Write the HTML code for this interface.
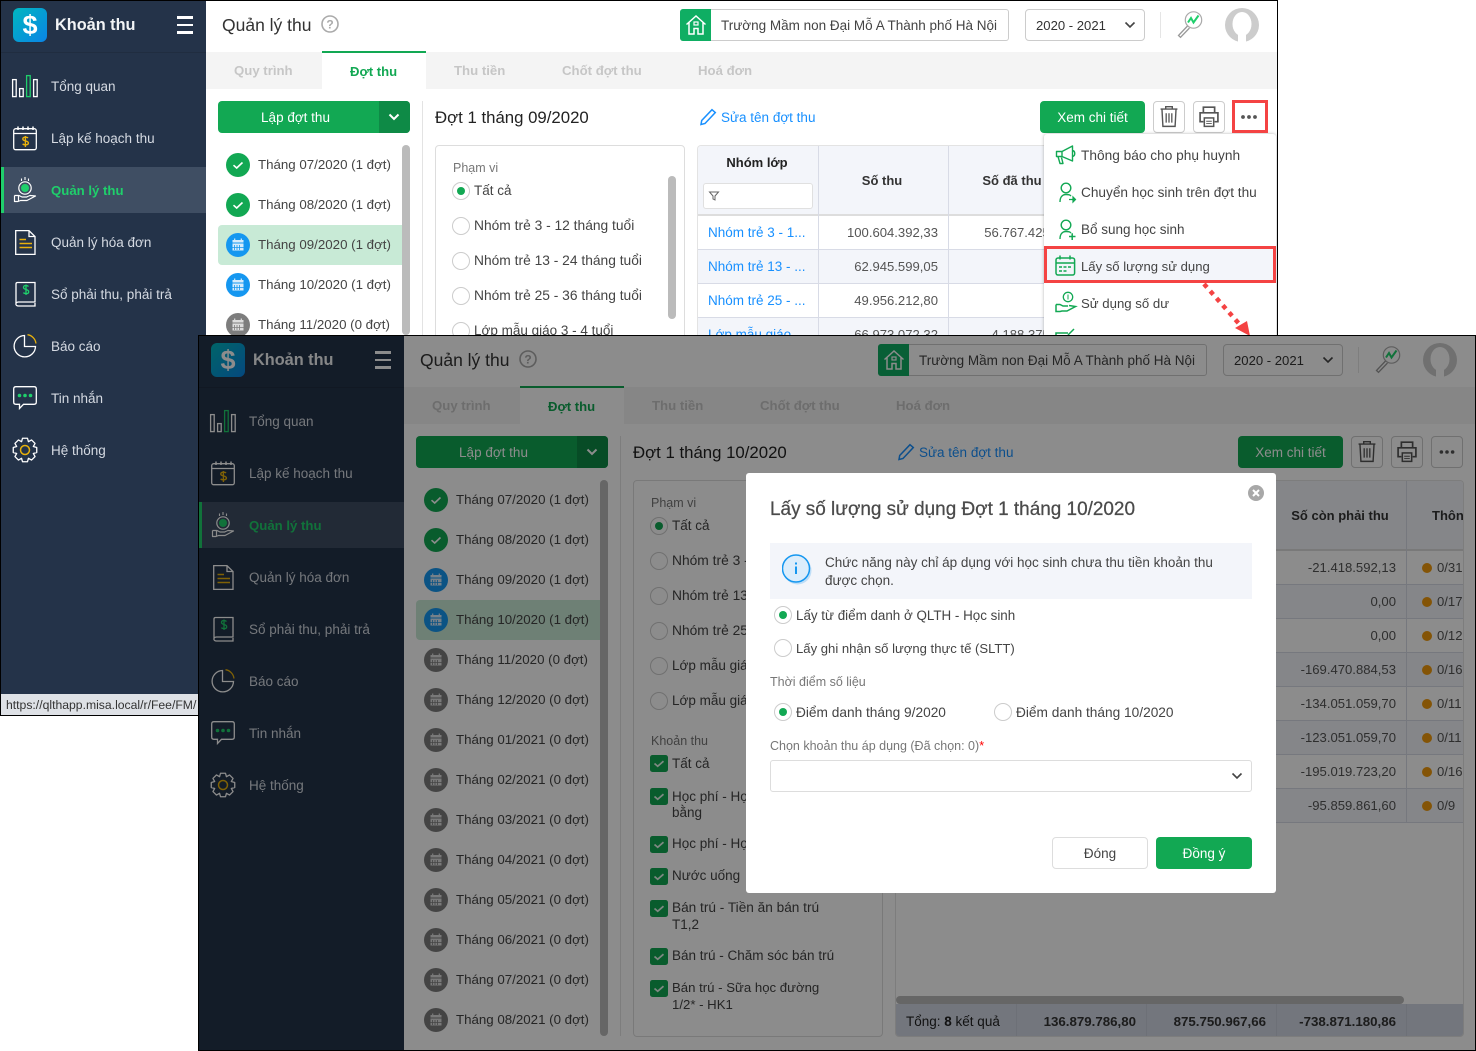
<!DOCTYPE html>
<html lang="vi"><head><meta charset="utf-8"><title>Quản lý thu</title>
<style>
*{box-sizing:border-box}
html,body{margin:0;padding:0;width:1476px;height:1051px;overflow:hidden;background:#fff;font-family:"Liberation Sans","DejaVu Sans",sans-serif;font-size:13.5px;color:#444}
.win{position:absolute;width:1278px;height:716px;overflow:hidden;background:#fff}
.a{position:absolute}
.t{position:absolute;white-space:nowrap;line-height:20px;height:20px;margin-top:1px}
.c{transform:translateX(-50%)}
.rr{transform:translateX(-100%)}
.bd{position:absolute;left:0;top:0;width:1278px;height:716px;border:1px solid #000;pointer-events:none}
.ov{position:absolute;left:0;top:0;width:1278px;height:716px;background:rgba(0,0,0,.45)}
.side{position:absolute;left:1px;top:1px;width:205px;height:714px;background:#243349}
.nt{color:#d5dae2}
.ic{position:absolute;width:30px;height:30px;left:10px}
.m{position:absolute;left:226px;width:24px;height:24px}
.r{position:absolute;width:18px;height:18px;border:1px solid #ccc;border-radius:50%;background:#fff}
.r.on:after{content:"";position:absolute;left:4px;top:4px;width:8px;height:8px;border-radius:50%;background:#12a853}
.k{position:absolute;left:452px;width:18px;height:17px}
.btn{position:absolute;border-radius:4px;background:#12a853;color:#fff;text-align:center;line-height:34px;height:32px}
.wb{position:absolute;top:101px;width:32px;height:32px;border:1px solid #ccc;border-radius:4px;background:#fff}
.tab{color:#c6c6c6;font-weight:bold;font-size:13.2px}
.lb{color:#777;font-size:12.5px}
.n{color:#555;font-size:13.1px}
.mo{font-size:13.3px;margin-top:0}
.ng{font-size:13.8px}
.lnk{color:#1890ff}
.b{font-weight:bold;color:#333;font-size:13.3px}
.red{position:absolute;border:3px solid #f44343}
.mi{position:absolute;left:1052px;width:26px;height:26px}
</style></head><body>
<svg width="0" height="0" style="position:absolute"><defs>
<symbol id="bars" viewBox="0 0 30 30"><g fill="none" stroke="#fff" stroke-width="1.3"><rect x="2.6" y="8.6" width="3.6" height="17"/><rect x="9.6" y="17.6" width="3.6" height="8"/><rect x="23.6" y="8.6" width="3.6" height="17"/></g><rect x="16.6" y="4.6" width="3.6" height="21" fill="none" stroke="#1fcf6b" stroke-width="1.3"/></symbol>
<symbol id="cal" viewBox="0 0 30 30"><rect x="3.7" y="5.7" width="22.6" height="21" rx="2" fill="none" stroke="#fff" stroke-width="1.3"/><path d="M4 10.5H26" stroke="#fff" stroke-width="1.2"/><path d="M8 3.5V7M13 3.5V7M18 3.5V7M23 3.5V7" stroke="#fff" stroke-width="1.5"/><path d="M18 15C17 13.800 12.800 13.800 12.800 16c0 2.600 5.600 1.300 5.600 4 0 2.300-4.200 2.100-5.800 1M15.400 13V24" fill="none" stroke="#e8b10c" stroke-width="1.400"/></symbol>
<symbol id="hand" viewBox="0 0 30 30"><circle cx="15" cy="13" r="6.200" fill="none" stroke="#fff" stroke-width="1.200"/><circle cx="15" cy="13" r="4" fill="#1fcf6b"/><path d="M15 2V5M11.500 3.500V6M18.500 3.500V6" stroke="#fff" stroke-width="1.100"/><path d="M4.500 20.500H9L12 22H17.500M4.500 20.500V26.500H8L10.500 25.500H17L25.500 21 20 20.500 16.500 22M8.500 20.500V26" fill="none" stroke="#fff" stroke-width="1.200" stroke-linejoin="round"/></symbol>
<symbol id="doc" viewBox="0 0 30 30"><path d="M5.700 3.600H19L25 9.500V27.400H5.700ZM19 3.600V9.500H25" fill="none" stroke="#fff" stroke-width="1.300"/><path d="M9.500 12.500H16M9.500 16.500H22M9.500 20.500H22" stroke="#e8b10c" stroke-width="1.400"/></symbol>
<symbol id="book" viewBox="0 0 30 30"><path d="M7.500 3.500H25V23H8.500C5 23 5 27 8.500 27H25V24M6 25V5C6 4 6.500 3.500 7.500 3.500" fill="none" stroke="#fff" stroke-width="1.300"/><path d="M18.500 7.500C17 6 13.500 6 13.500 8.500c0 2.600 5.200 1.500 5.200 4.200 0 2.500-3.700 2.300-5.400 1M16 5.500V16" fill="none" stroke="#1fcf6b" stroke-width="1.300"/></symbol>
<symbol id="pie" viewBox="0 0 30 30"><path d="M14.500 4.500A10.700 10.700 0 1 0 25.500 15.500H14.500Z" fill="none" stroke="#fff" stroke-width="1.300"/><path d="M17.500 3.700A10 10 0 0 1 26 12.500" fill="none" stroke="#e8b10c" stroke-width="1.300"/></symbol>
<symbol id="msg" viewBox="0 0 30 30"><path d="M6 3.700H24C25.500 3.700 26.300 4.500 26.300 6V19C26.300 20.500 25.500 21.300 24 21.300H13.500L9.500 25.500V21.300H6C4.500 21.300 3.700 20.500 3.700 19V6C3.700 4.500 4.500 3.700 6 3.700Z" fill="none" stroke="#fff" stroke-width="1.300"/><circle cx="9.500" cy="12.500" r="1.800" fill="#1fcf6b"/><circle cx="15" cy="12.500" r="1.800" fill="#1fcf6b"/><circle cx="20.500" cy="12.500" r="1.800" fill="#1fcf6b"/></symbol>
<symbol id="gear" viewBox="0 0 30 30"><polygon points="26.740,17.490 23.310,18.440 25.060,21.540 21.540,25.060 18.440,23.310 17.490,26.740 12.510,26.740 11.560,23.310 8.460,25.060 4.940,21.540 6.690,18.440 3.260,17.490 3.260,12.510 6.690,11.560 4.940,8.460 8.460,4.940 11.560,6.690 12.510,3.260 17.490,3.260 18.440,6.690 21.540,4.940 25.060,8.460 23.310,11.560 26.740,12.510" fill="none" stroke="#fff" stroke-width="1.300" stroke-linejoin="round"/><circle cx="15" cy="15" r="4.500" fill="none" stroke="#e8b10c" stroke-width="1.500"/></symbol>
<symbol id="mok" viewBox="0 0 24 24"><circle cx="12" cy="12" r="12" fill="#12a853"/><path d="M7.500 12.200L10.700 15 16.500 9.500" fill="none" stroke="#fff" stroke-width="1.600"/></symbol>
<symbol id="mbl" viewBox="0 0 24 24"><circle cx="12" cy="12" r="12" fill="#1597f0"/><rect x="6.500" y="7" width="11" height="10.500" fill="#d8ecfb"/><path d="M6.500 10H17.500" stroke="#1597f0"/><path d="M8.500 12V17M11 12V17M13.500 12V17M6.500 14.500H17.500" stroke="#1597f0" stroke-width=".8"/><path d="M8.700 5.500V8M15.300 5.500V8" stroke="#d8ecfb" stroke-width="1.200"/></symbol>
<symbol id="mgr" viewBox="0 0 24 24"><circle cx="12" cy="12" r="12" fill="#7d7d7d"/><rect x="6.500" y="7" width="11" height="10.500" fill="#ddd"/><path d="M6.500 10H17.500" stroke="#7d7d7d"/><path d="M8.500 12V17M11 12V17M13.500 12V17M6.500 14.500H17.500" stroke="#7d7d7d" stroke-width=".8"/><path d="M8.700 5.500V8M15.300 5.500V8" stroke="#ddd" stroke-width="1.200"/></symbol>
<symbol id="chk" viewBox="0 0 18 17"><rect width="18" height="17" rx="2.500" fill="#12a853"/><path d="M4.500 8.500L7.700 11.300 13.500 6.200" fill="none" stroke="#e8f8ee" stroke-width="1.700"/></symbol>
<symbol id="chev" viewBox="0 0 12 8"><path d="M1.500 1.500L6 6 10.500 1.500" fill="none" stroke="#444" stroke-width="1.600"/></symbol>
<symbol id="home" viewBox="0 0 24 24"><path d="M2.500 11.500L12 3 21.500 11.500M5 9.500V21H10V15.500H14V21H19V9.500" fill="none" stroke="#fff" stroke-width="1.500"/><rect x="10" y="9" width="4" height="3" fill="none" stroke="#fff" stroke-width="1.200"/></symbol>
<symbol id="srch" viewBox="0 0 30 30"><circle cx="18.500" cy="11" r="8.200" fill="none" stroke="#aaa" stroke-width="1.200"/><path d="M12.500 17L3.500 26.500 5.500 28.300 14.500 19" fill="none" stroke="#999" stroke-width="1.300"/><path d="M13 13.500L16 9 18.500 13.500 23.500 6.500" fill="none" stroke="#1fcf6b" stroke-width="2"/></symbol>
<symbol id="trash" viewBox="0 0 32 32"><path d="M7 7.500H25M12.500 7.500V5H19.500V7.500M8.500 7.500L9.500 26H22.500L23.500 7.500" fill="none" stroke="#555" stroke-width="1.500"/><path d="M13 12V22M16 12V22M19 12V22" stroke="#555" stroke-width="1.400"/></symbol>
<symbol id="print" viewBox="0 0 32 32"><path d="M10 11V5.500H22V11M10 21H6.500V11.500H25.500V21H22" fill="none" stroke="#555" stroke-width="1.800"/><rect x="11" y="17" width="10" height="9" fill="#fff" stroke="#555" stroke-width="1.600"/><path d="M13 20.500H19M13 23H19" stroke="#555"/></symbol>
<symbol id="dots" viewBox="0 0 32 32"><circle cx="10" cy="16" r="1.900" fill="#555"/><circle cx="16" cy="16" r="1.900" fill="#555"/><circle cx="22" cy="16" r="1.900" fill="#555"/></symbol>
<symbol id="pen" viewBox="0 0 18 18"><path d="M13 1.700L16.300 4.500 6 15.500 2 16.500 2.700 12.500Z" fill="none" stroke="#1890ff" stroke-width="1.500"/></symbol>
<symbol id="filt" viewBox="0 0 12 12"><path d="M1.500 2H10.500L7 6V10L5 9V6Z" fill="none" stroke="#666"/></symbol>
<symbol id="mega" viewBox="0 0 26 26"><path d="M4.500 9.500H10L20.500 4V19L10 14.500H4.500ZM10 9.500V14.500M6 14.500L8 21.500H11L9.500 15.500M20.500 8.500C23.500 9 23.500 14 20.500 14.500" fill="none" stroke="#12a853" stroke-width="1.400" stroke-linejoin="round"/></symbol>
<symbol id="utr" viewBox="0 0 26 26"><circle cx="14" cy="9" r="4.800" fill="none" stroke="#12a853" stroke-width="1.400"/><path d="M8 23C8 18 10.500 15.500 14 15.500S18 16 19 17" fill="none" stroke="#12a853" stroke-width="1.400"/><path d="M17 20.500H21M21 18V23L23.500 20.500Z" fill="#12a853" stroke="#12a853" stroke-width="1.200"/></symbol>
<symbol id="uadd" viewBox="0 0 26 26"><circle cx="14" cy="9" r="4.800" fill="none" stroke="#12a853" stroke-width="1.400"/><path d="M8 23C8 18 10.500 15.500 14 15.500S18 16 19 17" fill="none" stroke="#12a853" stroke-width="1.400"/><path d="M17 20.500H23.500M20.200 17.200V24" stroke="#12a853" stroke-width="1.500"/></symbol>
<symbol id="gcal" viewBox="0 0 26 26"><rect x="4" y="5" width="18.600" height="17" rx="2" fill="none" stroke="#12a853" stroke-width="1.500"/><path d="M4 10H22.300M8 2.500V6.500M18 2.500V6.500" stroke="#12a853" stroke-width="1.500"/><path d="M7 14H10M11.500 14H14.500M16 14H19M7 18H10M11.500 18H14.500" stroke="#12a853" stroke-width="1.500"/></symbol>
<symbol id="ghand" viewBox="0 0 26 26"><circle cx="16" cy="7" r="4.700" fill="none" stroke="#12a853" stroke-width="1.300"/><path d="M16 4.500V9.500" stroke="#12a853"/><path d="M4 14.500H8L11 16H16M4 14.500V21.500H8L10 21H15L23.500 16.500 17 15.500" fill="none" stroke="#12a853" stroke-width="1.500"/></symbol>
</defs></svg>

<!-- WINDOW 1 -->
<div class="win" style="left:0;top:0">
<div class="a" style="left:206px;top:1px;width:1071px;height:51px;background:#fff;box-shadow:0 1px 3px rgba(0,0,0,.08)"></div>
<div class="a" style="left:206px;top:52px;width:1071px;height:37px;background:#f4f4f4"></div>
<div class="a" style="left:322px;top:51px;width:104px;height:38px;background:#fff;border-top:2px solid #12a853"></div>
<div class="t" style="left:222px;top:14px;font-size:17.5px;color:#333">Quản lý thu</div>
<svg class="a" style="left:321px;top:15px" width="18" height="18"><circle cx="9" cy="9" r="8" fill="none" stroke="#aaa" stroke-width="1.600"/><text x="9" y="13.500" text-anchor="middle" font-size="12" font-weight="bold" fill="#aaa" font-family="Liberation Sans">?</text></svg>
<div class="a" style="left:680px;top:9px;width:329px;height:32px;border:1px solid #ccc;border-radius:3px"></div>
<div class="a" style="left:680px;top:9px;width:31px;height:32px;background:#0fae63;border-radius:3px 0 0 3px"></div>
<svg class="a" style="left:684px;top:13px" width="24" height="24"><use href="#home"/></svg>
<div class="t" style="left:721px;top:15px">Trường Mầm non Đại Mỗ A Thành phố Hà Nội</div>
<div class="a" style="left:1025px;top:9px;width:120px;height:32px;border:1px solid #ccc;border-radius:4px"></div>
<div class="t" style="left:1036px;top:15px;color:#333;font-size:13.1px">2020 - 2021</div>
<svg class="a" style="left:1124px;top:21px" width="12" height="8"><use href="#chev"/></svg>
<div class="a" style="left:1160px;top:12px;width:1px;height:26px;background:#e5e5e5"></div>
<svg class="a" style="left:1175px;top:9px" width="30" height="30"><use href="#srch"/></svg>
<svg class="a" style="left:1225px;top:8px" width="34" height="34"><circle cx="17" cy="17" r="17" fill="#ccc"/><ellipse cx="17" cy="16" rx="9.500" ry="12" fill="#fff"/><rect x="13" y="24" width="8" height="10" fill="#fff"/></svg>
<div class="t tab" style="left:234px;top:60px">Quy trình</div>
<div class="t" style="left:350px;top:61px;font-size:13.1px;font-weight:bold;color:#12a853">Đợt thu</div>
<div class="t tab" style="left:454px;top:60px">Thu tiền</div>
<div class="t tab" style="left:562px;top:60px">Chốt đợt thu</div>
<div class="t tab" style="left:698px;top:60px">Hoá đơn</div>
<div class="btn" style="left:218px;top:101px;width:192px;padding-right:37px">Lập đợt thu</div>
<div class="a" style="left:379px;top:101px;width:31px;height:32px;background:#0e8a46;border-radius:0 4px 4px 0"></div>
<svg class="a" style="left:388px;top:113px" width="12" height="8"><path d="M1.500 1.500L6 6 10.500 1.500" fill="none" stroke="#fff" stroke-width="2"/></svg>
<div class="a" style="left:218px;top:225px;width:184px;height:40px;background:#c8ead6;border-radius:4px 0 0 4px"></div>
<div class="a" style="left:402px;top:145px;width:8px;height:190px;background:#bbb;border-radius:4px"></div>
<div class="a" style="left:422px;top:101px;width:1px;height:240px;background:#e3e3e3"></div>
<svg class="m" style="top:153px"><use href="#mok"/></svg><div class="t mo" style="left:258px;top:155px">Tháng 07/2020 (1 đợt)</div>
<svg class="m" style="top:193px"><use href="#mok"/></svg><div class="t mo" style="left:258px;top:195px">Tháng 08/2020 (1 đợt)</div>
<svg class="m" style="top:233px"><use href="#mbl"/></svg><div class="t mo" style="left:258px;top:235px">Tháng 09/2020 (1 đợt)</div>
<svg class="m" style="top:273px"><use href="#mbl"/></svg><div class="t mo" style="left:258px;top:275px">Tháng 10/2020 (1 đợt)</div>
<svg class="m" style="top:313px"><use href="#mgr"/></svg><div class="t mo" style="left:258px;top:315px">Tháng 11/2020 (0 đợt)</div>
<div class="t" style="left:435px;top:107px;font-size:16.8px;color:#222">Đợt 1 tháng 09/2020</div>
<svg class="a" style="left:699px;top:108px" width="18" height="18"><use href="#pen"/></svg>
<div class="t lnk" style="left:721px;top:107px">Sửa tên đợt thu</div>
<div class="btn" style="left:1040px;top:101px;width:105px">Xem chi tiết</div>
<svg class="wb" style="left:1153px"><use href="#trash"/></svg>
<svg class="wb" style="left:1193px"><use href="#print"/></svg>
<svg class="wb" style="left:1233px;border:0"><use href="#dots"/></svg>
<div class="a" style="left:435px;top:145px;width:250px;height:240px;border:1px solid #ddd;border-radius:4px"></div>
<div class="t lb" style="left:453px;top:157px">Phạm vi</div>
<div class="a" style="left:668px;top:176px;width:8px;height:143px;background:#bbb;border-radius:4px"></div>
<div class="r on" style="left:452px;top:182px"></div><div class="t" style="left:474px;top:180px">Tất cả</div>
<div class="r" style="left:452px;top:217px"></div><div class="t ng" style="left:474px;top:215px">Nhóm trẻ 3 - 12 tháng tuổi</div>
<div class="r" style="left:452px;top:252px"></div><div class="t ng" style="left:474px;top:250px">Nhóm trẻ 13 - 24 tháng tuổi</div>
<div class="r" style="left:452px;top:287px"></div><div class="t ng" style="left:474px;top:285px">Nhóm trẻ 25 - 36 tháng tuổi</div>
<div class="r" style="left:452px;top:322px"></div><div class="t" style="left:474px;top:320px">Lớp mẫu giáo 3 - 4 tuổi</div>
<div class="a" style="left:697px;top:145px;width:569px;height:240px;border:1px solid #e3e3e3;border-bottom:0;border-radius:4px 4px 0 0;overflow:hidden">
 <div class="a" style="left:0;top:0;width:569px;height:70px;background:#f3f5fa;border-bottom:2px solid #ddd"></div>
 <div class="a" style="left:0;top:103px;width:569px;height:35px;background:#f3f5fa;border-top:1px solid #d8dbe6;border-bottom:1px solid #d8dbe6"></div>
 <div class="a" style="left:0;top:171px;width:569px;height:35px;background:#f3f5fa;border-top:1px solid #d8dbe6;border-bottom:1px solid #d8dbe6"></div>
 <div class="a" style="left:120px;top:0;width:1px;height:240px;background:#d8dbe6"></div>
 <div class="a" style="left:250px;top:0;width:1px;height:240px;background:#d8dbe6"></div>
</div>
<div class="t c" style="left:757px;top:152px;font-size:13px;font-weight:bold;color:#222">Nhóm lớp</div>
<div class="a" style="left:703px;top:183px;width:110px;height:26px;background:#fff;border:1px solid #e0e0e0;border-radius:3px"></div>
<svg class="a" style="left:708px;top:190px" width="12" height="12"><use href="#filt"/></svg>
<div class="t c" style="left:882px;top:170px;font-size:13px;font-weight:bold;color:#333">Số thu</div>
<div class="t c" style="left:1012px;top:170px;font-size:13px;font-weight:bold;color:#333">Số đã thu</div>
<div class="t lnk" style="left:708px;top:222px">Nhóm trẻ 3 - 1...</div>
<div class="t lnk" style="left:708px;top:256px">Nhóm trẻ 13 - ...</div>
<div class="t lnk" style="left:708px;top:290px">Nhóm trẻ 25 - ...</div>
<div class="t lnk" style="left:708px;top:324px">Lớp mẫu giáo ...</div>
<div class="t rr n" style="left:938px;top:222px">100.604.392,33</div>
<div class="t rr n" style="left:938px;top:256px">62.945.599,05</div>
<div class="t rr n" style="left:938px;top:290px">49.956.212,80</div>
<div class="t rr n" style="left:938px;top:324px">66.973.072,32</div>
<div class="t rr n" style="left:1068px;top:222px">56.767.425,03</div>
<div class="t rr n" style="left:1068px;top:324px">4.188.375,20</div>
<div class="a" style="left:1044px;top:134px;width:232px;height:210px;background:#fff;border-radius:3px;box-shadow:0 0 3px rgba(0,0,0,.3)"></div>
<svg class="mi" style="top:142px"><use href="#mega"/></svg><div class="t" style="left:1081px;top:145px;font-size:13.7px">Thông báo cho phụ huynh</div>
<svg class="mi" style="top:179px"><use href="#utr"/></svg><div class="t" style="left:1081px;top:182px;font-size:13.65px">Chuyển học sinh trên đợt thu</div>
<svg class="mi" style="top:216px"><use href="#uadd"/></svg><div class="t" style="left:1081px;top:219px">Bổ sung học sinh</div>
<div class="a" style="left:1044px;top:247px;width:232px;height:36px;background:#f3f5fa"></div>
<svg class="mi" style="top:253px"><use href="#gcal"/></svg><div class="t" style="left:1081px;top:256px;font-size:13.1px">Lấy số lượng sử dụng</div>
<svg class="mi" style="top:290px"><use href="#ghand"/></svg><div class="t" style="left:1081px;top:293px;font-size:13.2px">Sử dụng số dư</div>
<svg class="a" style="left:1054px;top:328px" width="24" height="10"><path d="M2 10V5H14M14 7L20 1" fill="none" stroke="#12a853" stroke-width="1.500"/></svg>
<div class="red" style="left:1044px;top:246px;width:232px;height:37px"></div>
<div class="red" style="left:1232px;top:100px;width:36px;height:33px"></div>
<svg class="a" style="left:1195px;top:280px" width="70" height="60"><path d="M9 4L46 46" stroke="#f44343" stroke-width="4.500" stroke-dasharray="4.500 5" fill="none"/><polygon points="40,48 52,41 55,56" fill="#f44343"/></svg>
<div class="side"></div>
<div class="a" style="left:1px;top:52px;width:205px;height:1px;background:#202d40"></div>
<div class="a" style="left:13px;top:8px;width:34px;height:34px;border-radius:6px;background:linear-gradient(135deg,#00b7bf,#0a84e6)"></div>
<div class="t c" style="left:30px;top:10px;font-size:27px;font-weight:bold;color:#fff;line-height:28px;height:28px">$</div>
<div class="t" style="left:55px;top:14px;font-size:16.3px;font-weight:bold;color:#f2f4f6">Khoản thu</div>
<div class="a" style="left:177px;top:16px;width:16px;height:2.500px;background:#fff"></div>
<div class="a" style="left:177px;top:23.500px;width:16px;height:2.500px;background:#fff"></div>
<div class="a" style="left:177px;top:31px;width:16px;height:2.500px;background:#fff"></div>
<div class="a" style="left:1px;top:167px;width:205px;height:46px;background:#3f4e63"></div>
<div class="a" style="left:1px;top:167px;width:3px;height:46px;background:#1fcf6b"></div>
<svg class="ic" style="top:71px"><use href="#bars"/></svg><div class="t nt" style="left:51px;top:76px">Tổng quan</div>
<svg class="ic" style="top:123px"><use href="#cal"/></svg><div class="t nt" style="left:51px;top:128px">Lập kế hoạch thu</div>
<svg class="ic" style="top:175px"><use href="#hand"/></svg><div class="t" style="left:51px;top:180px;color:#1fcf6b;font-weight:bold;font-size:13.2px">Quản lý thu</div>
<svg class="ic" style="top:227px"><use href="#doc"/></svg><div class="t nt" style="left:51px;top:232px">Quản lý hóa đơn</div>
<svg class="ic" style="top:279px"><use href="#book"/></svg><div class="t nt" style="left:51px;top:284px">Sổ phải thu, phải trả</div>
<svg class="ic" style="top:331px"><use href="#pie"/></svg><div class="t nt" style="left:51px;top:336px">Báo cáo</div>
<svg class="ic" style="top:383px"><use href="#msg"/></svg><div class="t nt" style="left:51px;top:388px">Tin nhắn</div>
<svg class="ic" style="top:435px"><use href="#gear"/></svg><div class="t nt" style="left:51px;top:440px">Hệ thống</div>
<div class="a" style="left:1px;top:694px;width:205px;height:21px;background:#dee1e6"></div>
<div class="t" style="left:6px;top:694px;font-size:12.2px;color:#333">https://qlthapp.misa.local/r/Fee/FM/</div>
<div class="bd"></div>
</div>

<!-- WINDOW 2 -->
<div class="win" style="left:198px;top:335px">
<div class="a" style="left:206px;top:1px;width:1071px;height:51px;background:#fff;box-shadow:0 1px 3px rgba(0,0,0,.08)"></div>
<div class="a" style="left:206px;top:52px;width:1071px;height:37px;background:#f4f4f4"></div>
<div class="a" style="left:322px;top:51px;width:104px;height:38px;background:#fff;border-top:2px solid #12a853"></div>
<div class="t" style="left:222px;top:14px;font-size:17.500px;color:#333">Quản lý thu</div>
<svg class="a" style="left:321px;top:15px" width="18" height="18"><circle cx="9" cy="9" r="8" fill="none" stroke="#aaa" stroke-width="1.600"/><text x="9" y="13.500" text-anchor="middle" font-size="12" font-weight="bold" fill="#aaa" font-family="Liberation Sans">?</text></svg>
<div class="a" style="left:680px;top:9px;width:329px;height:32px;border:1px solid #ccc;border-radius:3px"></div>
<div class="a" style="left:680px;top:9px;width:31px;height:32px;background:#0fae63;border-radius:3px 0 0 3px"></div>
<svg class="a" style="left:684px;top:13px" width="24" height="24"><use href="#home"/></svg>
<div class="t" style="left:721px;top:15px">Trường Mầm non Đại Mỗ A Thành phố Hà Nội</div>
<div class="a" style="left:1025px;top:9px;width:120px;height:32px;border:1px solid #ccc;border-radius:4px"></div>
<div class="t" style="left:1036px;top:15px;color:#333;font-size:13.1px">2020 - 2021</div>
<svg class="a" style="left:1124px;top:21px" width="12" height="8"><use href="#chev"/></svg>
<div class="a" style="left:1160px;top:12px;width:1px;height:26px;background:#e5e5e5"></div>
<svg class="a" style="left:1175px;top:9px" width="30" height="30"><use href="#srch"/></svg>
<svg class="a" style="left:1225px;top:8px" width="34" height="34"><circle cx="17" cy="17" r="17" fill="#ccc"/><ellipse cx="17" cy="16" rx="9.500" ry="12" fill="#fff"/><rect x="13" y="24" width="8" height="10" fill="#fff"/></svg>
<div class="t tab" style="left:234px;top:60px">Quy trình</div>
<div class="t" style="left:350px;top:61px;font-size:13.1px;font-weight:bold;color:#12a853">Đợt thu</div>
<div class="t tab" style="left:454px;top:60px">Thu tiền</div>
<div class="t tab" style="left:562px;top:60px">Chốt đợt thu</div>
<div class="t tab" style="left:698px;top:60px">Hoá đơn</div>
<div class="btn" style="left:218px;top:101px;width:192px;padding-right:37px">Lập đợt thu</div>
<div class="a" style="left:379px;top:101px;width:31px;height:32px;background:#0e8a46;border-radius:0 4px 4px 0"></div>
<svg class="a" style="left:388px;top:113px" width="12" height="8"><path d="M1.500 1.500L6 6 10.500 1.500" fill="none" stroke="#fff" stroke-width="2"/></svg>
<div class="a" style="left:218px;top:265px;width:184px;height:40px;background:#c8ead6;border-radius:4px 0 0 4px"></div>
<div class="a" style="left:402px;top:145px;width:8px;height:556px;background:#bbb;border-radius:4px"></div>
<div class="a" style="left:422px;top:101px;width:1px;height:600px;background:#e3e3e3"></div>
<svg class="m" style="top:153px"><use href="#mok"/></svg><div class="t mo" style="left:258px;top:155px">Tháng 07/2020 (1 đợt)</div>
<svg class="m" style="top:193px"><use href="#mok"/></svg><div class="t mo" style="left:258px;top:195px">Tháng 08/2020 (1 đợt)</div>
<svg class="m" style="top:233px"><use href="#mbl"/></svg><div class="t mo" style="left:258px;top:235px">Tháng 09/2020 (1 đợt)</div>
<svg class="m" style="top:273px"><use href="#mbl"/></svg><div class="t mo" style="left:258px;top:275px">Tháng 10/2020 (1 đợt)</div>
<svg class="m" style="top:313px"><use href="#mgr"/></svg><div class="t mo" style="left:258px;top:315px">Tháng 11/2020 (0 đợt)</div>
<svg class="m" style="top:353px"><use href="#mgr"/></svg><div class="t mo" style="left:258px;top:355px">Tháng 12/2020 (0 đợt)</div>
<svg class="m" style="top:393px"><use href="#mgr"/></svg><div class="t mo" style="left:258px;top:395px">Tháng 01/2021 (0 đợt)</div>
<svg class="m" style="top:433px"><use href="#mgr"/></svg><div class="t mo" style="left:258px;top:435px">Tháng 02/2021 (0 đợt)</div>
<svg class="m" style="top:473px"><use href="#mgr"/></svg><div class="t mo" style="left:258px;top:475px">Tháng 03/2021 (0 đợt)</div>
<svg class="m" style="top:513px"><use href="#mgr"/></svg><div class="t mo" style="left:258px;top:515px">Tháng 04/2021 (0 đợt)</div>
<svg class="m" style="top:553px"><use href="#mgr"/></svg><div class="t mo" style="left:258px;top:555px">Tháng 05/2021 (0 đợt)</div>
<svg class="m" style="top:593px"><use href="#mgr"/></svg><div class="t mo" style="left:258px;top:595px">Tháng 06/2021 (0 đợt)</div>
<svg class="m" style="top:633px"><use href="#mgr"/></svg><div class="t mo" style="left:258px;top:635px">Tháng 07/2021 (0 đợt)</div>
<svg class="m" style="top:673px"><use href="#mgr"/></svg><div class="t mo" style="left:258px;top:675px">Tháng 08/2021 (0 đợt)</div>
<div class="t" style="left:435px;top:107px;font-size:16.8px;color:#222">Đợt 1 tháng 10/2020</div>
<svg class="a" style="left:699px;top:108px" width="18" height="18"><use href="#pen"/></svg>
<div class="t lnk" style="left:721px;top:107px">Sửa tên đợt thu</div>
<div class="btn" style="left:1040px;top:101px;width:105px">Xem chi tiết</div>
<svg class="wb" style="left:1153px"><use href="#trash"/></svg>
<svg class="wb" style="left:1193px"><use href="#print"/></svg>
<svg class="wb" style="left:1233px"><use href="#dots"/></svg>
<div class="a" style="left:435px;top:145px;width:250px;height:557px;border:1px solid #ddd;border-radius:4px"></div>
<div class="t lb" style="left:453px;top:157px">Phạm vi</div>
<div class="r on" style="left:452px;top:182px"></div><div class="t" style="left:474px;top:180px">Tất cả</div>
<div class="r" style="left:452px;top:217px"></div><div class="t ng" style="left:474px;top:215px">Nhóm trẻ 3 - 12 tháng tuổi</div>
<div class="r" style="left:452px;top:252px"></div><div class="t ng" style="left:474px;top:250px">Nhóm trẻ 13 - 24 tháng tuổi</div>
<div class="r" style="left:452px;top:287px"></div><div class="t ng" style="left:474px;top:285px">Nhóm trẻ 25 - 36 tháng tuổi</div>
<div class="r" style="left:452px;top:322px"></div><div class="t" style="left:474px;top:320px">Lớp mẫu giáo 3 - 4 tuổi</div>
<div class="r" style="left:452px;top:357px"></div><div class="t" style="left:474px;top:355px">Lớp mẫu giáo 4 - 5 tuổi</div>
<div class="t lb" style="left:453px;top:395px">Khoản thu</div>
<svg class="k" style="top:420px"><use href="#chk"/></svg><div class="t" style="left:474px;top:418px">Tất cả</div>
<svg class="k" style="top:453px"><use href="#chk"/></svg><div class="t" style="left:474px;top:451px">Học phí - Học kỳ 1</div><div class="t" style="left:474px;top:467px">bằng</div>
<svg class="k" style="top:501px"><use href="#chk"/></svg><div class="t" style="left:474px;top:498px">Học phí - Học kỳ 2</div>
<svg class="k" style="top:533px"><use href="#chk"/></svg><div class="t" style="left:474px;top:530px">Nước uống</div>
<svg class="k" style="top:565px"><use href="#chk"/></svg><div class="t" style="left:474px;top:562px;font-size:13.65px">Bán trú - Tiền ăn bán trú</div><div class="t" style="left:474px;top:579px">T1,2</div>
<svg class="k" style="top:613px"><use href="#chk"/></svg><div class="t" style="left:474px;top:610px">Bán trú - Chăm sóc bán trú</div>
<svg class="k" style="top:645px"><use href="#chk"/></svg><div class="t" style="left:474px;top:642px;font-size:13.2px">Bán trú - Sữa học đường</div><div class="t" style="left:474px;top:659px;font-size:13.2px">1/2* - HK1</div>
<div class="a" style="left:697px;top:145px;width:569px;height:557px;border:1px solid #e3e3e3;border-radius:4px;overflow:hidden">
 <div class="a" style="left:0;top:0;width:569px;height:70px;background:#f3f5fa;border-bottom:2px solid #ddd"></div>
 <div class="a" style="left:0;top:103px;width:569px;height:35px;background:#f3f5fa;border-top:1px solid #d8dbe6;border-bottom:1px solid #d8dbe6"></div>
 <div class="a" style="left:0;top:171px;width:569px;height:35px;background:#f3f5fa;border-top:1px solid #d8dbe6;border-bottom:1px solid #d8dbe6"></div>
 <div class="a" style="left:0;top:239px;width:569px;height:35px;background:#f3f5fa;border-top:1px solid #d8dbe6;border-bottom:1px solid #d8dbe6"></div>
 <div class="a" style="left:0;top:307px;width:569px;height:35px;background:#f3f5fa;border-top:1px solid #d8dbe6;border-bottom:1px solid #d8dbe6"></div>
 <div class="a" style="left:510px;top:0;width:1px;height:342px;background:#d8dbe6"></div>
 <div class="a" style="left:0;top:515px;width:508px;height:8px;background:#bbb;border-radius:4px"></div>
 <div class="a" style="left:0;top:523px;width:569px;height:34px;background:#d1d7e4"></div>
 <div class="a" style="left:120px;top:523px;width:1px;height:34px;background:#c6ccd9"></div>
 <div class="a" style="left:250px;top:523px;width:1px;height:34px;background:#c6ccd9"></div>
 <div class="a" style="left:380px;top:523px;width:1px;height:34px;background:#c6ccd9"></div>
 <div class="a" style="left:510px;top:523px;width:1px;height:34px;background:#c6ccd9"></div>
</div>
<div class="t c" style="left:1142px;top:170px;font-size:13px;font-weight:bold;color:#333">Số còn phải thu</div>
<div class="a" style="left:1234px;top:170px;width:32px;height:22px;overflow:hidden"><div class="t" style="left:0;top:0;font-size:13px;font-weight:bold;color:#333">Thông tin</div></div>
<div class="t rr n" style="left:1198px;top:222px">-21.418.592,13</div>
<div class="t rr n" style="left:1198px;top:256px">0,00</div>
<div class="t rr n" style="left:1198px;top:290px">0,00</div>
<div class="t rr n" style="left:1198px;top:324px">-169.470.884,53</div>
<div class="t rr n" style="left:1198px;top:358px">-134.051.059,70</div>
<div class="t rr n" style="left:1198px;top:392px">-123.051.059,70</div>
<div class="t rr n" style="left:1198px;top:426px">-195.019.723,20</div>
<div class="t rr n" style="left:1198px;top:460px">-95.859.861,60</div>
<div class="a" style="left:1224px;top:228px;width:10px;height:10px;border-radius:50%;background:#f09a0b"></div><div class="a" style="left:1239px;top:222px;width:27px;height:22px;overflow:hidden"><div class="t n" style="left:0;top:0">0/31</div></div>
<div class="a" style="left:1224px;top:262px;width:10px;height:10px;border-radius:50%;background:#f09a0b"></div><div class="a" style="left:1239px;top:256px;width:27px;height:22px;overflow:hidden"><div class="t n" style="left:0;top:0">0/17</div></div>
<div class="a" style="left:1224px;top:296px;width:10px;height:10px;border-radius:50%;background:#f09a0b"></div><div class="a" style="left:1239px;top:290px;width:27px;height:22px;overflow:hidden"><div class="t n" style="left:0;top:0">0/12</div></div>
<div class="a" style="left:1224px;top:330px;width:10px;height:10px;border-radius:50%;background:#f09a0b"></div><div class="a" style="left:1239px;top:324px;width:27px;height:22px;overflow:hidden"><div class="t n" style="left:0;top:0">0/16</div></div>
<div class="a" style="left:1224px;top:364px;width:10px;height:10px;border-radius:50%;background:#f09a0b"></div><div class="a" style="left:1239px;top:358px;width:27px;height:22px;overflow:hidden"><div class="t n" style="left:0;top:0">0/11</div></div>
<div class="a" style="left:1224px;top:398px;width:10px;height:10px;border-radius:50%;background:#f09a0b"></div><div class="a" style="left:1239px;top:392px;width:27px;height:22px;overflow:hidden"><div class="t n" style="left:0;top:0">0/11</div></div>
<div class="a" style="left:1224px;top:432px;width:10px;height:10px;border-radius:50%;background:#f09a0b"></div><div class="a" style="left:1239px;top:426px;width:27px;height:22px;overflow:hidden"><div class="t n" style="left:0;top:0">0/16</div></div>
<div class="a" style="left:1224px;top:466px;width:10px;height:10px;border-radius:50%;background:#f09a0b"></div><div class="a" style="left:1239px;top:460px;width:27px;height:22px;overflow:hidden"><div class="t n" style="left:0;top:0">0/9</div></div>
<div class="t" style="left:708px;top:676px;color:#222">Tổng: <b>8</b> kết quả</div>
<div class="t rr b" style="left:938px;top:676px">136.879.786,80</div>
<div class="t rr b" style="left:1068px;top:676px">875.750.967,66</div>
<div class="t rr b" style="left:1198px;top:676px">-738.871.180,86</div>
<div class="side"></div>
<div class="a" style="left:1px;top:52px;width:205px;height:1px;background:#202d40"></div>
<div class="a" style="left:13px;top:8px;width:34px;height:34px;border-radius:6px;background:linear-gradient(135deg,#00b7bf,#0a84e6)"></div>
<div class="t c" style="left:30px;top:10px;font-size:27px;font-weight:bold;color:#fff;line-height:28px;height:28px">$</div>
<div class="t" style="left:55px;top:14px;font-size:16.3px;font-weight:bold;color:#f2f4f6">Khoản thu</div>
<div class="a" style="left:177px;top:16px;width:16px;height:2.500px;background:#fff"></div>
<div class="a" style="left:177px;top:23.500px;width:16px;height:2.500px;background:#fff"></div>
<div class="a" style="left:177px;top:31px;width:16px;height:2.500px;background:#fff"></div>
<div class="a" style="left:1px;top:167px;width:205px;height:46px;background:#3f4e63"></div>
<div class="a" style="left:1px;top:167px;width:3px;height:46px;background:#1fcf6b"></div>
<svg class="ic" style="top:71px"><use href="#bars"/></svg><div class="t nt" style="left:51px;top:76px">Tổng quan</div>
<svg class="ic" style="top:123px"><use href="#cal"/></svg><div class="t nt" style="left:51px;top:128px">Lập kế hoạch thu</div>
<svg class="ic" style="top:175px"><use href="#hand"/></svg><div class="t" style="left:51px;top:180px;color:#1fcf6b;font-weight:bold;font-size:13.2px">Quản lý thu</div>
<svg class="ic" style="top:227px"><use href="#doc"/></svg><div class="t nt" style="left:51px;top:232px">Quản lý hóa đơn</div>
<svg class="ic" style="top:279px"><use href="#book"/></svg><div class="t nt" style="left:51px;top:284px">Sổ phải thu, phải trả</div>
<svg class="ic" style="top:331px"><use href="#pie"/></svg><div class="t nt" style="left:51px;top:336px">Báo cáo</div>
<svg class="ic" style="top:383px"><use href="#msg"/></svg><div class="t nt" style="left:51px;top:388px">Tin nhắn</div>
<svg class="ic" style="top:435px"><use href="#gear"/></svg><div class="t nt" style="left:51px;top:440px">Hệ thống</div>
<div class="ov"></div>
<div class="bd"></div>
<div class="a" style="left:548px;top:138px;width:530px;height:420px;background:#fff;border-radius:3px"></div>
<div class="t" style="left:572px;top:164px;font-size:18.95px;color:#4a4a4a;-webkit-text-stroke:.25px #4a4a4a">Lấy số lượng sử dụng Đợt 1 tháng 10/2020</div>
<svg class="a" style="left:1050px;top:150px" width="16" height="16"><circle cx="8" cy="8" r="8" fill="#a8a8a8"/><path d="M5 5L11 11M11 5L5 11" stroke="#fff" stroke-width="2"/></svg>
<div class="a" style="left:572px;top:208px;width:482px;height:56px;background:#f3f5fa"></div>
<svg class="a" style="left:584px;top:219px" width="32" height="32"><circle cx="15.500" cy="16.500" r="14" fill="#bfdef7"/><circle cx="14" cy="14.500" r="13.500" fill="#dcedfb" stroke="#1597f0" stroke-width="1.500"/><path d="M14 12.500V20M14 8.500V10.500" stroke="#1597f0" stroke-width="2"/></svg>
<div class="t" style="left:627px;top:217px">Chức năng này chỉ áp dụng với học sinh chưa thu tiền khoản thu</div>
<div class="t" style="left:627px;top:235px">được chọn.</div>
<div class="r on" style="left:576px;top:271px"></div><div class="t" style="left:598px;top:270px;font-size:13.4px">Lấy từ điểm danh ở QLTH - Học sinh</div>
<div class="r" style="left:576px;top:304px"></div><div class="t" style="left:598px;top:303px;font-size:13.1px">Lấy ghi nhận số lượng thực tế (SLTT)</div>
<div class="t lb" style="left:572px;top:336px">Thời điểm số liệu</div>
<div class="r on" style="left:576px;top:368px"></div><div class="t" style="left:598px;top:367px;font-size:13.7px">Điểm danh tháng 9/2020</div>
<div class="r" style="left:796px;top:368px"></div><div class="t" style="left:818px;top:367px;font-size:13.7px">Điểm danh tháng 10/2020</div>
<div class="t lb" style="left:572px;top:400px">Chọn khoản thu áp dụng (Đã chọn: 0)<span style="color:#f00">*</span></div>
<div class="a" style="left:572px;top:425px;width:482px;height:32px;border:1px solid #ddd;border-radius:3px"></div>
<svg class="a" style="left:1033px;top:437px" width="12" height="8"><use href="#chev"/></svg>
<div class="a" style="left:854px;top:502px;width:96px;height:32px;border:1px solid #ddd;border-radius:4px;text-align:center;line-height:31px;color:#444">Đóng</div>
<div class="btn" style="left:958px;top:502px;width:96px">Đồng ý</div>
</div>
</body></html>
